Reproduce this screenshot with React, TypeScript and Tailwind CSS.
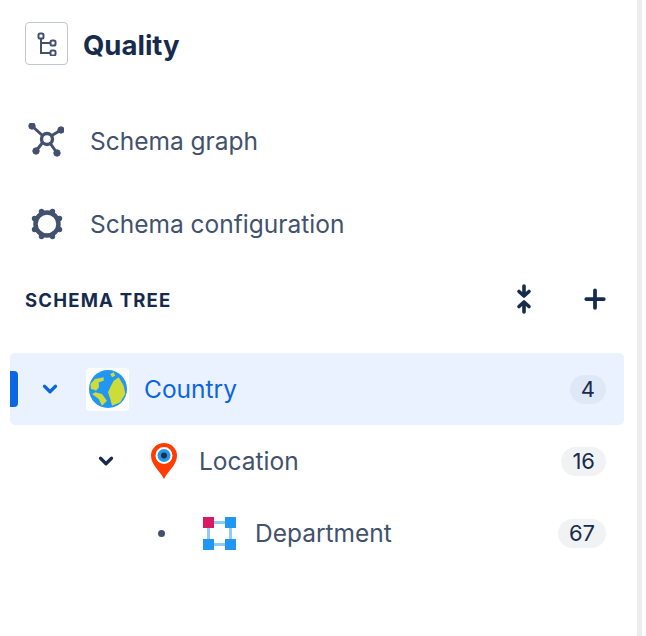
import { ChevronDown, Plus } from 'lucide-react';

function TreeIcon() {
  return (
    <svg width="20" height="24" viewBox="0 0 20 24" fill="none" stroke="#42526e" strokeWidth="2">
      <rect x="1.500" y="1.500" width="5" height="5" rx="1.600" />
      <path d="M4 7v14h9.500M4 11h9.500" />
      <rect x="13.500" y="8.500" width="5" height="5" rx="1.600" />
      <rect x="13.500" y="18.500" width="5" height="5" rx="1.600" />
    </svg>
  );
}

function GraphIcon() {
  return (
    <svg width="36" height="36" viewBox="0 0 36 36" fill="#42526e" stroke="#42526e">
      <path d="M4 3l11 10M33 7l-10 6M8 28l7-9M29 30l-7-10" strokeWidth="3" fill="none" />
      <circle cx="19" cy="16" r="5.500" fill="none" strokeWidth="3.400" />
      <circle cx="4" cy="3" r="3.200" />
      <circle cx="33" cy="7" r="3.200" />
      <circle cx="8" cy="28" r="3.200" />
      <circle cx="29" cy="30" r="3.200" />
    </svg>
  );
}

function GearIcon() {
  return (
    <svg width="34" height="34" viewBox="0 0 34 34" fill="#42526e">
      <circle cx="17" cy="17" r="11.500" fill="none" stroke="#42526e" strokeWidth="4.500" />
      <circle cx="11.500" cy="4.500" r="2.700" />
      <circle cx="22.500" cy="4.500" r="2.700" />
      <circle cx="4.500" cy="11.500" r="2.700" />
      <circle cx="29.500" cy="11.500" r="2.700" />
      <circle cx="4.500" cy="22.500" r="2.700" />
      <circle cx="29.500" cy="22.500" r="2.700" />
      <circle cx="11.500" cy="29.500" r="2.700" />
      <circle cx="22.500" cy="29.500" r="2.700" />
    </svg>
  );
}

function CollapseIcon() {
  return (
    <svg width="16" height="30" viewBox="0 0 16 30" fill="none" stroke="#172b4d" strokeWidth="3.600" strokeLinecap="round" strokeLinejoin="round">
      <path d="M8 2v9.500M3 7.500L8 12l5-4.500M8 28V18.500M3 22.500L8 18l5 4.500" />
    </svg>
  );
}

function GlobeIcon() {
  return (
    <svg width="38" height="38" viewBox="0 0 38 38">
      <circle cx="19" cy="19" r="19" fill="#2196f3" />
      <path d="M1.500 14L6 9l8.700-1.700v3.400l-5 1.600.3 5-3 3.400-2-1L2 19z" fill="#cddc39" />
      <path d="M6.300 22.300L13 24l5 6.700-5 5-3.300-6.700L3 24z" fill="#cddc39" />
      <path d="M24.700 10.700l5-3.400 5 8.400 1.600 8.300-5 8.300-8.300 3.400-1.700-6.700-2.300-6.700 2.300-5z" fill="#cddc39" />
      <path d="M21.300 4l3.400-1.700 1.600 3.400-3.300 1.600z" fill="#cddc39" />
    </svg>
  );
}

function PinIcon() {
  return (
    <svg width="26" height="36" viewBox="0 0 26 36">
      <path d="M13 36C9 28 0 22 0 12.500a13 12.500 0 0 1 26 0C26 22 17 28 13 36z" fill="#ff3d00" />
      <circle cx="13" cy="12.500" r="8.500" fill="#fff" />
      <circle cx="13" cy="12.500" r="6.500" fill="#2196f3" />
      <circle cx="13" cy="12.500" r="3" fill="#263238" />
    </svg>
  );
}

function NodesIcon() {
  return (
    <svg width="33" height="33" viewBox="0 0 33 33">
      <path d="M5.500 5.500h22v22h-22z" fill="none" stroke="#90caf9" strokeWidth="3" />
      <rect x="0" y="0" width="11" height="11" fill="#d81b60" />
      <rect x="22" y="0" width="11" height="11" fill="#2196f3" />
      <rect x="0" y="22" width="11" height="11" fill="#2196f3" />
      <rect x="22" y="22" width="11" height="11" fill="#2196f3" />
    </svg>
  );
}

export default function App() {
  return (
    <div className="w-[646px] h-[636px] bg-white overflow-hidden flex font-['Inter',sans-serif] text-[#42526e]">
      <div className="w-[637px] pl-[10px] pr-[13px] shrink-0">
        {/* Header */}
        <div className="flex items-start gap-[15px] pl-[15px] pt-[22px]">
          <div className="w-[43px] h-[43px] rounded-[4px] border border-[#c1c7d0] flex items-center justify-center">
            <TreeIcon />
          </div>
          <h1 className="text-[27.500px] font-bold text-[#172b4d] leading-[46px]">Quality</h1>
        </div>

        {/* Nav */}
        <div className="mt-[52px] pl-[18px] flex items-center gap-[26px] h-[42px]">
          <GraphIcon />
          <span className="text-[24.500px]">Schema graph</span>
        </div>
        <div className="mt-[41px] pl-[20px] flex items-center gap-[26px] h-[42px]">
          <GearIcon />
          <span className="text-[24.500px]">Schema configuration</span>
        </div>

        {/* Section */}
        <div className="mt-[37px] pl-[15px] pr-[16px] flex items-center justify-between h-[34px]">
          <span className="text-[18.500px] leading-[30px] pt-[1px] font-bold tracking-[1.200px] text-[#172b4d]">SCHEMA TREE</span>
          <div className="flex items-center gap-[50px]">
            <CollapseIcon />
            <Plus size={30} strokeWidth={3} className="text-[#172b4d] -mx-[2px]" />
          </div>
        </div>

        {/* Tree */}
        <div className="mt-[37px]">
          <div className="relative h-[72px] rounded-[5px] bg-[#e9f2fe] flex items-center pr-[18px] text-[#0c66e4]">
            <div className="absolute left-0 top-[18px] w-[8px] h-[36px] rounded-r-[4px] bg-[#0c66e4]" />
            <ChevronDown size={22} strokeWidth={3.500} className="ml-[29px]" />
            <div className="ml-[25px] w-[43px] h-[43px] rounded-[4px] bg-white flex items-center justify-center">
              <GlobeIcon />
            </div>
            <span className="ml-[15px] text-[24.500px] flex-1">Country</span>
            <span className="h-[29px] px-[11px] rounded-full bg-[#dfe8f6] text-[22px] text-[#172b4d] flex items-center">4</span>
          </div>
          <div className="h-[72px] flex items-center pr-[18px]">
            <ChevronDown size={22} strokeWidth={3.500} className="ml-[85px] text-[#172b4d]" />
            <div className="ml-[34px] w-[26px] flex justify-center">
              <PinIcon />
            </div>
            <span className="ml-[22px] text-[24.500px] flex-1">Location</span>
            <span className="h-[29px] px-[11px] rounded-full bg-[#f1f2f4] text-[22px] text-[#172b4d] flex items-center">16</span>
          </div>
          <div className="h-[72px] flex items-center pr-[18px]">
            <div className="ml-[148px] w-[7px] h-[7px] rounded-full bg-[#42526e]" />
            <div className="ml-[38px]">
              <NodesIcon />
            </div>
            <span className="ml-[19px] text-[24.500px] flex-1">Department</span>
            <span className="h-[29px] px-[11px] rounded-full bg-[#f1f2f4] text-[22px] text-[#172b4d] flex items-center">67</span>
          </div>
        </div>
      </div>
      <div className="w-[5px] h-full bg-[#ebecf0] shrink-0" />
    </div>
  );
}
